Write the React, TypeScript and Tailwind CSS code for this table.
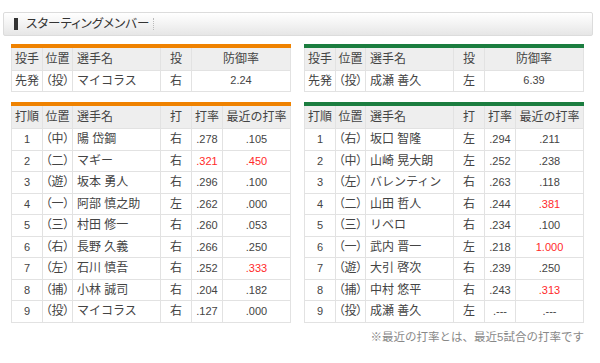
import React from 'react';

type Batter = { order: string; pos: string; name: string; bat: string; avg: string; recent: string; avgRed?: boolean; recentRed?: boolean };

const giants: Batter[] = [
  { order: '1', pos: '（中）', name: '陽 岱鋼', bat: '右', avg: '.278', recent: '.105' },
  { order: '2', pos: '（二）', name: 'マギー', bat: '右', avg: '.321', recent: '.450', avgRed: true, recentRed: true },
  { order: '3', pos: '（遊）', name: '坂本 勇人', bat: '右', avg: '.296', recent: '.100' },
  { order: '4', pos: '（一）', name: '阿部 慎之助', bat: '左', avg: '.262', recent: '.000' },
  { order: '5', pos: '（三）', name: '村田 修一', bat: '右', avg: '.260', recent: '.053' },
  { order: '6', pos: '（右）', name: '長野 久義', bat: '右', avg: '.266', recent: '.250' },
  { order: '7', pos: '（左）', name: '石川 慎吾', bat: '右', avg: '.252', recent: '.333', recentRed: true },
  { order: '8', pos: '（捕）', name: '小林 誠司', bat: '右', avg: '.204', recent: '.182' },
  { order: '9', pos: '（投）', name: 'マイコラス', bat: '右', avg: '.127', recent: '.000' },
];

const swallows: Batter[] = [
  { order: '1', pos: '（右）', name: '坂口 智隆', bat: '左', avg: '.294', recent: '.211' },
  { order: '2', pos: '（中）', name: '山崎 晃大朗', bat: '左', avg: '.252', recent: '.238' },
  { order: '3', pos: '（左）', name: 'バレンティン', bat: '右', avg: '.263', recent: '.118' },
  { order: '4', pos: '（二）', name: '山田 哲人', bat: '右', avg: '.244', recent: '.381', recentRed: true },
  { order: '5', pos: '（三）', name: 'リベロ', bat: '右', avg: '.234', recent: '.100' },
  { order: '6', pos: '（一）', name: '武内 晋一', bat: '左', avg: '.218', recent: '1.000', recentRed: true },
  { order: '7', pos: '（遊）', name: '大引 啓次', bat: '右', avg: '.239', recent: '.250' },
  { order: '8', pos: '（捕）', name: '中村 悠平', bat: '右', avg: '.243', recent: '.313', recentRed: true },
  { order: '9', pos: '（投）', name: '成瀬 善久', bat: '左', avg: '.---', recent: '.---' },
];

const th = 'border border-[#e2e2e2] bg-[#eeeeee] font-normal text-[12px] text-[#444] h-[22px] p-0';
const td = 'border border-[#e2e2e2] text-[12px] text-[#444] p-0 text-center';
const pos = `${td} whitespace-nowrap [font-feature-settings:'palt']`;
const num = 'border border-[#e2e2e2] text-[11px] p-0 text-center';

const PitcherTable: React.FC<{ bar: string; name: string; hand: string; era: string }> = ({ bar, name, hand, era }) => (
  <div className="w-[280px]">
    <div className={`h-[4px] ${bar}`} />
    <table className="w-full border-collapse table-fixed">
      <colgroup>
        <col className="w-[31px]" />
        <col className="w-[30px]" />
        <col className="w-[88px]" />
        <col className="w-[31px]" />
        <col />
      </colgroup>
      <thead>
        <tr>
          <th className={`${th} border-t-0`}>投手</th>
          <th className={`${th} border-t-0`}>位置</th>
          <th className={`${th} border-t-0 text-left pl-[4px]`}>選手名</th>
          <th className={`${th} border-t-0`}>投</th>
          <th className={`${th} border-t-0`}>防御率</th>
        </tr>
      </thead>
      <tbody>
        <tr className="h-[21px]">
          <td className={td}>先発</td>
          <td className={pos}>（投）</td>
          <td className={`${td} text-left pl-[4px] text-[#2a7dbd]`}>{name}</td>
          <td className={td}>{hand}</td>
          <td className={`${num} text-[#444]`}>{era}</td>
        </tr>
      </tbody>
    </table>
  </div>
);

const BattingTable: React.FC<{ bar: string; rows: Batter[] }> = ({ bar, rows }) => (
  <div className="w-[280px]">
    <div className={`h-[4px] ${bar}`} />
    <table className="w-full border-collapse table-fixed">
      <colgroup>
        <col className="w-[31px]" />
        <col className="w-[30px]" />
        <col className="w-[88px]" />
        <col className="w-[31px]" />
        <col className="w-[31px]" />
        <col />
      </colgroup>
      <thead>
        <tr>
          <th className={`${th} border-t-0 h-[23px]`}>打順</th>
          <th className={`${th} border-t-0`}>位置</th>
          <th className={`${th} border-t-0 text-left pl-[4px]`}>選手名</th>
          <th className={`${th} border-t-0`}>打</th>
          <th className={`${th} border-t-0`}>打率</th>
          <th className={`${th} border-t-0`}>最近の打率</th>
        </tr>
      </thead>
      <tbody>
        {rows.map(r => (
          <tr key={r.order} className="h-[21.5px]">
            <td className={`${num} text-[#444]`}>{r.order}</td>
            <td className={pos}>{r.pos}</td>
            <td className={`${td} text-left pl-[4px] text-[#2a7dbd]`}>{r.name}</td>
            <td className={td}>{r.bat}</td>
            <td className={`${num} ${r.avgRed ? 'text-[#ff2a2a]' : 'text-[#444]'}`}>{r.avg}</td>
            <td className={`${num} ${r.recentRed ? 'text-[#ff2a2a]' : 'text-[#444]'}`}>{r.recent}</td>
          </tr>
        ))}
      </tbody>
    </table>
  </div>
);

export default function App() {
  return (
    <div
      className="w-[600px] h-[363px] bg-white overflow-hidden pt-[12px]"
      style={{ fontFamily: '"Liberation Sans", "Noto Sans CJK JP", sans-serif' }}
    >
      {/* Section header */}
      <div className="ml-[3px] w-[590px] h-[24px] border border-[#dcdcdc] rounded-[2px] bg-gradient-to-b from-white via-[#f3f3f3] to-[#e6e6e6] flex items-center">
        <div className="ml-[10px] w-[4px] h-[12px] bg-[#333]" />
        <span className="ml-[8px] text-[12.5px] text-[#333] [font-feature-settings:'palt']">スターティングメンバー</span>
        <div className="ml-[4px] h-[12px] border-l border-dotted border-[#bbb]" />
      </div>

      <div className="flex gap-[13px] ml-[11px] mt-[8px]">
        <div className="flex flex-col gap-[10px]">
          <PitcherTable bar="bg-[#ef8200]" name="マイコラス" hand="右" era="2.24" />
          <BattingTable bar="bg-[#ef8200]" rows={giants} />
        </div>
        <div className="flex flex-col gap-[10px]">
          <PitcherTable bar="bg-[#1b7d3f]" name="成瀬 善久" hand="左" era="6.39" />
          <BattingTable bar="bg-[#1b7d3f]" rows={swallows} />
          <p className="text-right text-[11.5px] text-[#888] -mt-[4px]">※最近の打率とは、最近5試合の打率です</p>
        </div>
      </div>
    </div>
  );
}
